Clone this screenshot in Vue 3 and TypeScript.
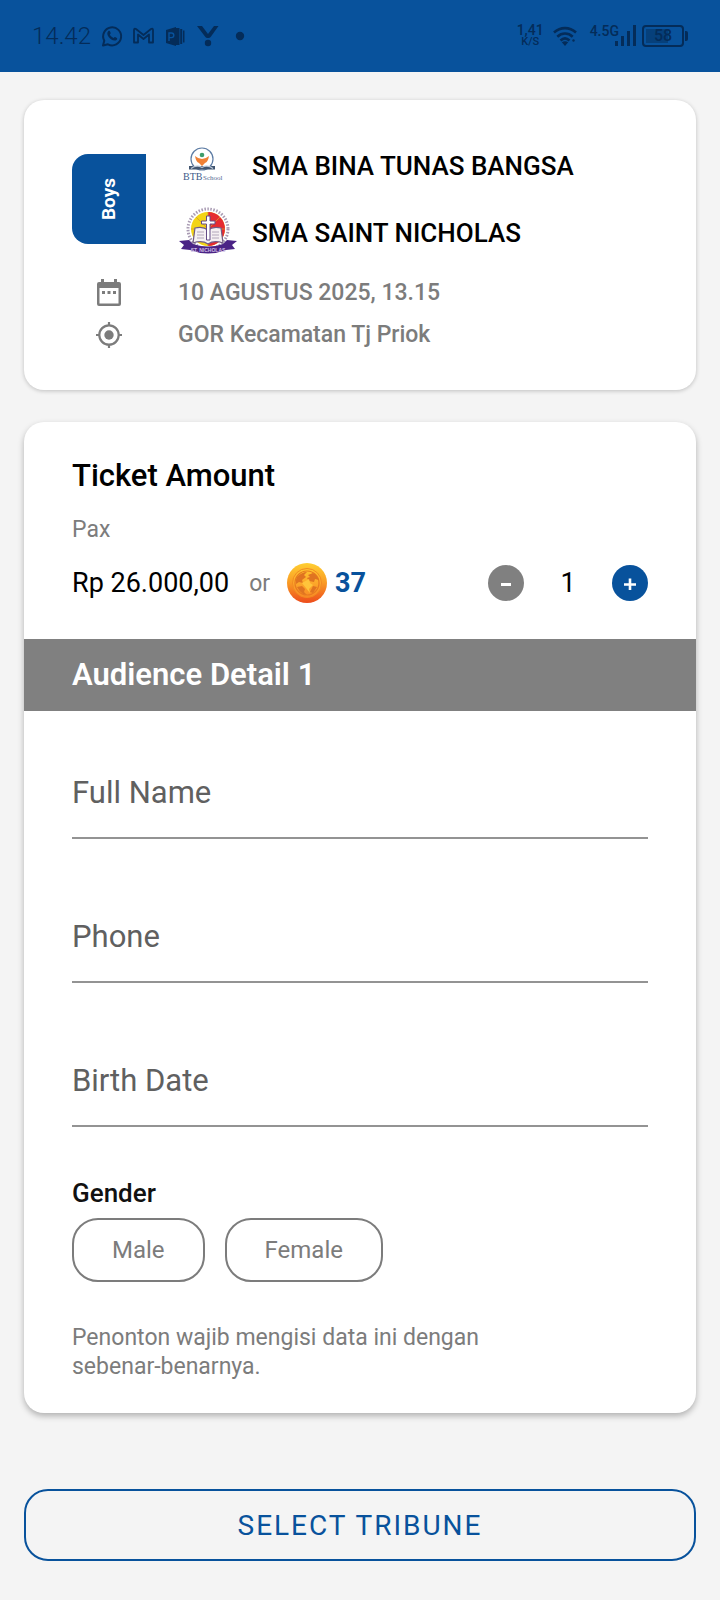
<script setup lang="ts">
import { computed, ref } from 'vue'

interface Field {
  id: string
  label: string
  type: string
}

const fields: Field[] = [
  { id: 'full-name', label: 'Full Name', type: 'text' },
  { id: 'phone', label: 'Phone', type: 'tel' },
  { id: 'birth-date', label: 'Birth Date', type: 'text' },
]
const genders: string[] = ['Male', 'Female']

const pax = ref(1)
const gender = ref('')
const values = ref<Record<string, string>>({ 'full-name': '', phone: '', 'birth-date': '' })
const atMinimum = computed(() => pax.value <= 1)

function decrease(): void {
  if (!atMinimum.value) pax.value -= 1
}
</script>

<template>
  <div class="screen">
    <header class="status">
      <span class="clock">14.42</span>
      <svg class="apps" width="146" height="24" viewBox="0 0 146 24" aria-hidden="true">
        <!-- chat -->
        <path d="M3 21.5l1.3-4.8A9 9 0 1 1 8 20.3z" fill="none" stroke="currentColor" stroke-width="2" stroke-linejoin="round" />
        <path d="M8.2 7.2c.8-.7 1.5-.4 1.8.3l.7 1.6c.1.5-.6 1.1-.9 1.5.9 1.7 2 2.7 3.8 3.5.5-.5 1-1.300 1.500-1.100l1.800.9c.6.4.2 1.500-.4 2-1.300 1.100-3.400.6-5.200-.5-2-1.300-3.600-3.300-4-5.300-.1-1.200.2-2.200.9-2.900z" fill="currentColor" />
        <!-- mail -->
        <path d="M34 18.500V6q0-2 2-1l7.500 6L51 5q2-1 2 1v12.500h-4v-8L43.500 15 38 10.500v8z" fill="none" stroke="currentColor" stroke-width="1.800" stroke-linejoin="round" />
        <!-- slides -->
        <path d="M66 6l10-3v19l-10-3z" fill="currentColor" />
        <path d="M76 4h3.500v17H76zM80.200 5h2v15h-2zM83 6.500h1.500v12H83z" fill="currentColor" />
        <path d="M69 17V9h2.500a2.300 2.300 0 0 1 0 4.600H69" fill="none" stroke="#08529c" stroke-width="1.400" />
        <!-- fork -->
        <path d="M97 2h5l6 8 6-8h4.500l-7.500 10.500c-1.500 2-4.500 2-6 0z" fill="currentColor" />
        <circle cx="108" cy="19" r="3.200" fill="currentColor" />
        <circle cx="140" cy="12" r="4.200" fill="currentColor" />
      </svg>
      <span class="spacer"></span>
      <span class="speed"><b>1,41</b><small>K/S</small></span>
      <svg class="wifi" width="24" height="20" viewBox="0 0 24 20" aria-hidden="true">
        <g fill="none" stroke="currentColor" stroke-width="2.600">
          <path d="M1 6.500c6.500-5.800 15.500-5.800 22 0" />
          <path d="M4.300 10.700c4.600-4.200 10.800-4.200 15.400 0" />
          <path d="M7.500 14.500c2.800-2.600 6.200-2.600 9 0" />
        </g>
        <path d="M12 20l-3.200-3.700c2-1.500 4.400-1.500 6.400 0z" fill="currentColor" />
        <circle cx="20.500" cy="14.500" r="1.200" fill="currentColor" />
      </svg>
      <span class="network">4.5G</span>
      <svg class="bars" width="21" height="22" viewBox="0 0 21 22" aria-hidden="true">
        <path d="M0 16h3v5H0zM6 11h3v10H6zM12 6h3v15h-3zM18 0h3v21h-3z" fill="currentColor" />
      </svg>
      <span class="battery">58</span>
    </header>

    <main class="content">
      <section class="card match">
        <div class="badge"><span>Boys</span></div>
        <div class="teams">
          <div class="team">
            <svg width="60" height="60" viewBox="0 0 60 60" aria-hidden="true">
              <circle cx="24" cy="23" r="11" fill="none" stroke="#5d7ca4" stroke-width="1.200" />
              <path d="M17 20q7 6 14 0q-1 6-4 7l-3 3-3-3q-3-1-4-7z" fill="#f08136" />
              <circle cx="24" cy="19" r="2.300" fill="#3f9d6b" />
              <path d="M11 30h26v3.500H11z" fill="#40546f" />
              <path d="M13 32.500q5.500-4 11-1 5.500-3 11 1" fill="none" stroke="#b9c6d8" stroke-width="1.200" />
              <text x="5" y="44" font-family="Liberation Serif, serif" font-size="10" fill="#3c5a8a">BTB</text>
              <text x="25" y="44" font-family="Liberation Serif, serif" font-size="7" fill="#4f6690">School</text>
            </svg>
            <span>SMA BINA TUNAS BANGSA</span>
          </div>
          <div class="team">
            <svg width="60" height="60" viewBox="0 0 60 60" aria-hidden="true">
              <circle cx="30" cy="26" r="20" fill="none" stroke="#a99bb3" stroke-width="3" stroke-dasharray="1.500 1.500" />
              <circle cx="30" cy="26" r="17" fill="#f3d416" />
              <path d="M30 9a17 17 0 0 1 0 34z" fill="#e52b32" />
              <path d="M30 9v34M13 26h34M18 14l24 24M42 14L18 38" stroke="#d99a2c" stroke-width=".8" />
              <path d="M17 25q8-2 13 2 5-4 13-2l2 15q-9-3-15 1-6-4-15-1z" fill="#f5f0f2" stroke="#705c85" stroke-width="1.200" />
              <path d="M19 29h7M19 32h7M19 35h7M34 29h7M34 32h7M34 35h7" stroke="#b2a6ba" stroke-width="1" />
              <path d="M28.500 13h3.500v5h5v3h-5v16h-3.500V21h-5v-3h5z" fill="#fff" stroke="#644b86" stroke-width="1" />
              <path d="M1 38l10-1 4 4q15 5 30 0l4-4 10 1-5 4 3 4-9 1q-18 7-36 0l-9-1 3-4z" fill="#4a2385" />
              <text x="30" y="49" text-anchor="middle" font-family="Liberation Sans, sans-serif" font-size="5" font-weight="700" fill="#cdbce3">ST. NICHOLAS</text>
            </svg>
            <span>SMA SAINT NICHOLAS</span>
          </div>
        </div>
        <svg class="info-icon" width="28" height="28" viewBox="0 0 28 28" aria-hidden="true">
          <path fill-rule="evenodd" d="M6 0h3v3h10V0h3v3h2a2 2 0 0 1 2 2v20a2 2 0 0 1-2 2H4a2 2 0 0 1-2-2V5a2 2 0 0 1 2-2h2zM4.500 9v15.500h19V9zM7 12h3v3H7zm5.500 0h3v3h-3zm5.500 0h3v3h-3z" fill="currentColor" />
        </svg>
        <span class="info">10 AGUSTUS 2025, 13.15</span>
        <svg class="info-icon" width="28" height="28" viewBox="0 0 28 28" aria-hidden="true">
          <circle cx="14" cy="14" r="9.700" fill="none" stroke="currentColor" stroke-width="2.200" />
          <circle cx="14" cy="14" r="4.700" fill="currentColor" />
          <path d="M14 1v4M14 23v4M1 14h4M23 14h4" stroke="currentColor" stroke-width="2.200" />
        </svg>
        <span class="info">GOR Kecamatan Tj Priok</span>
      </section>

      <section class="card ticket">
        <div class="amount">
          <h2>Ticket Amount</h2>
          <p class="pax">Pax</p>
          <div class="price-row">
            <span class="price">Rp 26.000,00</span>
            <span class="or">or</span>
            <svg width="40" height="40" viewBox="0 0 40 40" aria-hidden="true">
              <defs>
                <linearGradient id="coin" x1="0" y1="0" x2="0" y2="1">
                  <stop offset="0" stop-color="#ffcf32" />
                  <stop offset=".5" stop-color="#f99a24" />
                  <stop offset="1" stop-color="#ed4c1c" />
                </linearGradient>
                <linearGradient id="coin-face" x1="0" y1="0" x2="0" y2="1">
                  <stop offset="0" stop-color="#ffc52f" />
                  <stop offset="1" stop-color="#f98a25" />
                </linearGradient>
              </defs>
              <circle cx="20" cy="20" r="20" fill="url(#coin)" />
              <circle cx="20" cy="20" r="14.500" fill="url(#coin-face)" stroke="#f28a22" stroke-width="1" />
              <circle cx="20" cy="20" r="12" fill="none" stroke="#e87a20" stroke-width="1.200" />
              <path d="M10 14q5-5 10-5l-3 3 2 2-4 3 1 3-4-1-3 2q-1-4 1-7zM21 12l5-2q4 2 6 7l-4-1-1 3-5-1-2-3 3-1zM10 24l5-1 3 3-1 3 3 3-4-1q-4-3-6-7zM26 23l4 1-4 6-3-1z" fill="#df7421" />
              <path d="M15 20l7-4 1 4 3 2-4 4 1 4-4-5z" fill="#ffc43b" />
            </svg>
            <strong class="coins">37</strong>
            <div class="stepper">
              <button type="button" class="minus" aria-label="Decrease pax" :aria-disabled="atMinimum" @click="decrease">
                <svg width="12" height="14" viewBox="0 0 12 14" aria-hidden="true"><path d="M1 8.500h10" stroke="currentColor" stroke-width="3" /></svg>
              </button>
              <output>{{ pax }}</output>
              <button type="button" class="plus" aria-label="Increase pax" @click="pax += 1">
                <svg width="12" height="14" viewBox="0 0 12 14" aria-hidden="true"><path d="M0 8.500h12M6 2.500v12" stroke="currentColor" stroke-width="2.600" /></svg>
              </button>
            </div>
          </div>
        </div>

        <h3 class="band">Audience Detail 1</h3>

        <form class="form" @submit.prevent>
          <div v-for="field in fields" :key="field.id" class="field">
            <label v-show="!values[field.id]" :for="field.id">{{ field.label }}</label>
            <input :id="field.id" v-model="values[field.id]" :type="field.type" />
          </div>
          <h4 id="gender-title">Gender</h4>
          <div class="genders" role="group" aria-labelledby="gender-title">
            <button
              v-for="option in genders"
              :key="option"
              type="button"
              :class="{ chosen: gender === option }"
              :aria-pressed="gender === option"
              @click="gender = option"
            >{{ option }}</button>
          </div>
          <p class="note">Penonton wajib mengisi data ini dengan<br />sebenar-benarnya.</p>
        </form>
      </section>

      <button type="button" class="select">SELECT TRIBUNE</button>
    </main>
  </div>
</template>

<style>
body {
  margin: 0;
  background: #f4f4f4;
}
</style>

<style scoped>
.screen {
  min-height: 100vh;
  background: #f4f4f4;
  color: #000;
  font-family: Roboto, "Liberation Sans", sans-serif;
}
.screen *,
.screen {
  box-sizing: border-box;
}
h2, h3, h4, p {
  margin: 0;
}
svg {
  display: block;
  flex: none;
}
button {
  font-family: inherit;
  cursor: pointer;
}

.status {
  display: flex;
  align-items: center;
  height: 72px;
  padding: 0 32px;
  background: #08529c;
  color: #042c59;
}
.clock {
  font-size: 24px;
  line-height: 28px;
  font-weight: 300;
}
.apps {
  margin-left: 9px;
}
.spacer {
  flex: 1;
}
.speed {
  display: flex;
  flex-direction: column;
  align-items: center;
  line-height: 12px;
}
.speed b {
  font-size: 14px;
  font-weight: 500;
}
.speed small {
  font-size: 11px;
  font-weight: 500;
}
.wifi {
  margin-left: 9px;
}
.network {
  align-self: flex-start;
  margin-top: 22px;
  margin-left: 13px;
  font-size: 14px;
  line-height: 18px;
  font-weight: 500;
}
.bars {
  margin-left: -4px;
}
.battery {
  position: relative;
  width: 42px;
  height: 22px;
  margin: 0 4px 0 6px;
  border: 2px solid #042c59;
  border-radius: 4px;
  background: linear-gradient(90deg, #06407b 22px, transparent 22px) 2px 2px / 34px 14px no-repeat;
  font-size: 16px;
  line-height: 18px;
  font-weight: 500;
  text-align: center;
}
.battery::after {
  content: "";
  position: absolute;
  top: 4px;
  right: -6px;
  width: 3px;
  height: 10px;
  border-radius: 0 2px 2px 0;
  background: #042c59;
}

.content {
  padding: 28px 24px 38px;
}
.card {
  overflow: hidden;
  border-radius: 20px;
  background: #fff;
}
.match {
  display: grid;
  grid-template-columns: 74px 1fr;
  column-gap: 32px;
  align-items: center;
  padding: 36px 48px 34px;
  box-shadow: 0 1px 4px rgba(0, 0, 0, 0.22);
}
.badge {
  display: flex;
  align-self: start;
  align-items: center;
  justify-content: center;
  height: 90px;
  margin-top: 18px;
  border-radius: 16px 0 0 16px;
  background: #08529c;
  color: #fff;
  font-size: 19px;
  line-height: 24px;
  font-weight: 700;
}
.badge span {
  writing-mode: vertical-rl;
  transform: rotate(180deg);
}
.teams {
  display: grid;
  gap: 7px;
  padding-bottom: 9px;
}
.team {
  display: flex;
  align-items: center;
  gap: 14px;
  font-size: 26px;
  line-height: 60px;
  font-weight: 500;
  white-space: nowrap;
}
.info-icon {
  justify-self: center;
  color: #7c7c7c;
}
.info {
  color: #7c7c7c;
  font-size: 23px;
  line-height: 42px;
  font-weight: 500;
}

.ticket {
  margin-top: 32px;
  box-shadow: 0 3px 6px rgba(0, 0, 0, 0.28);
}
.amount {
  padding: 34px 48px 36px;
}
h2, .band {
  font-size: 31px;
  line-height: 40px;
  font-weight: 500;
}
.pax {
  margin-top: 19px;
  color: #7c7c7c;
  font-size: 23px;
  line-height: 30px;
}
.price-row {
  display: flex;
  align-items: center;
  margin-top: 18px;
}
.price {
  font-size: 27px;
  line-height: 40px;
}
.or {
  margin: 0 17px 0 20px;
  color: #7c7c7c;
  font-size: 23px;
}
.coins {
  margin-left: 8px;
  color: #08529c;
  font-size: 27px;
}
.stepper {
  display: flex;
  align-items: center;
  justify-content: space-between;
  width: 160px;
  margin-left: auto;
  font-size: 27px;
}
.stepper button {
  display: grid;
  place-items: center;
  width: 36px;
  height: 36px;
  padding: 0;
  border: 0;
  border-radius: 50%;
  background: #08529c;
  color: #fff;
}
.stepper .minus {
  background: #808080;
}
.band {
  padding: 16px 48px;
  background: #808080;
  color: #fff;
  font-weight: 600;
}

.form {
  padding: 0 48px 32px;
}
.field {
  display: grid;
  height: 128px;
  border-bottom: 2px solid #939393;
}
.field + .field {
  height: 144px;
}
.field label,
.field input {
  grid-area: 1 / 1;
  align-self: end;
  height: 88px;
  font-size: 31px;
  line-height: 88px;
}
.field label {
  color: #606060;
}
.field input {
  width: 100%;
  padding: 0;
  border: 0;
  outline: 0;
  background: transparent;
  color: #000;
  font-family: inherit;
}
h4 {
  margin-top: 50px;
  color: #111;
  font-size: 26px;
  line-height: 32px;
  font-weight: 500;
}
.genders {
  display: flex;
  gap: 20px;
  margin-top: 9px;
}
.genders button {
  height: 64px;
  padding: 0 38px;
  border: 2px solid #7c7c7c;
  border-radius: 26px;
  background: #fff;
  color: #7c7c7c;
  font-size: 24px;
}
.genders .chosen {
  border-color: #08529c;
  color: #08529c;
}
.note {
  margin-top: 41px;
  color: #7c7c7c;
  font-size: 23px;
  line-height: 29px;
}
.select {
  display: block;
  width: 100%;
  height: 72px;
  margin-top: 76px;
  border: 2px solid #08529c;
  border-radius: 24px;
  background: transparent;
  color: #08529c;
  font-size: 28px;
  letter-spacing: 2px;
}
</style>
